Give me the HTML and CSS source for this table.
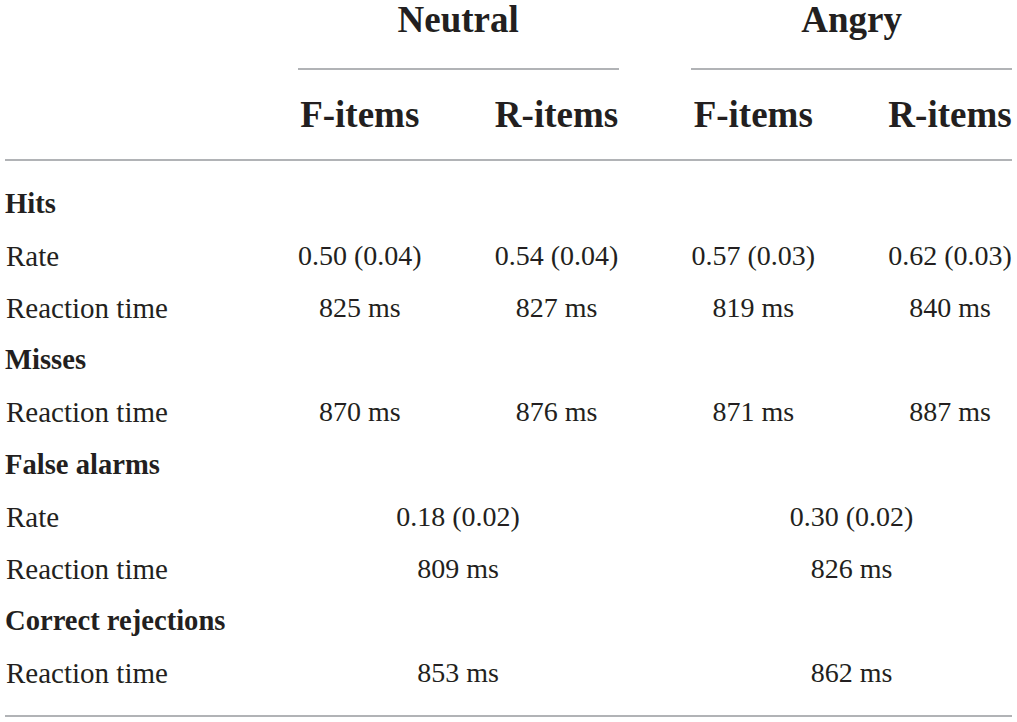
FILE: index.html
```html
<!DOCTYPE html>
<html lang="en">
<head>
<meta charset="utf-8">
<title>Table</title>
<link rel="stylesheet" href="styles.css">
</head>
<body>
<div class="table">
  <div class="grid head">
    <div class="cell"></div>
    <div class="cell group span2">Neutral</div>
    <div class="cell group span2">Angry</div>
    <div class="cell sub"></div>
    <div class="cell sub">F-items</div>
    <div class="cell sub">R-items</div>
    <div class="cell sub">F-items</div>
    <div class="cell sub">R-items</div>
  </div>
  <div class="grid body">
    <div class="cell section">Hits</div>
    <div class="cell label">Rate</div>
    <div class="cell val">0.50 (0.04)</div>
    <div class="cell val">0.54 (0.04)</div>
    <div class="cell val">0.57 (0.03)</div>
    <div class="cell val">0.62 (0.03)</div>
    <div class="cell label">Reaction time</div>
    <div class="cell val">825 ms</div>
    <div class="cell val">827 ms</div>
    <div class="cell val">819 ms</div>
    <div class="cell val">840 ms</div>
    <div class="cell section">Misses</div>
    <div class="cell label">Reaction time</div>
    <div class="cell val">870 ms</div>
    <div class="cell val">876 ms</div>
    <div class="cell val">871 ms</div>
    <div class="cell val">887 ms</div>
    <div class="cell section">False alarms</div>
    <div class="cell label">Rate</div>
    <div class="cell val span2">0.18 (0.02)</div>
    <div class="cell val span2">0.30 (0.02)</div>
    <div class="cell label">Reaction time</div>
    <div class="cell val span2">809 ms</div>
    <div class="cell val span2">826 ms</div>
    <div class="cell section">Correct rejections</div>
    <div class="cell label">Reaction time</div>
    <div class="cell val span2">853 ms</div>
    <div class="cell val span2">862 ms</div>
  </div>
</div>
</body>
</html>
```

FILE: styles.css
```css
html, body {
  margin: 0;
  padding: 0;
  background: #ffffff;
}

body {
  font-family: "Liberation Serif", "Times New Roman", serif;
  color: #231f20;
}

.table {
  width: 1007px;
  margin-left: 5px;
}

.grid {
  display: grid;
  grid-template-columns: 220px repeat(4, 124px);
  column-gap: 72.75px;
  border-bottom: 2px solid #b1b3b6;
}

.cell {
  white-space: nowrap;
}

.span2 {
  grid-column: span 2;
}

.head .cell {
  font-size: 37px;
  font-weight: bold;
  line-height: 40px;
  text-align: center;
}

.head .group {
  padding-bottom: 28px;
  border-bottom: 2px solid #b1b3b6;
}

.head .sub {
  padding-top: 25px;
  padding-bottom: 24px;
}

.body {
  padding-top: 16.5px;
  padding-bottom: 15.5px;
}

.body .cell {
  font-size: 29px;
  line-height: 52.2px;
}

.body .section {
  grid-column: 1 / -1;
  font-weight: bold;
  font-size: 28.6px;
}

.body .label {
  padding-left: 1px;
}

.body .val {
  font-size: 28px;
  text-align: center;
}
```
